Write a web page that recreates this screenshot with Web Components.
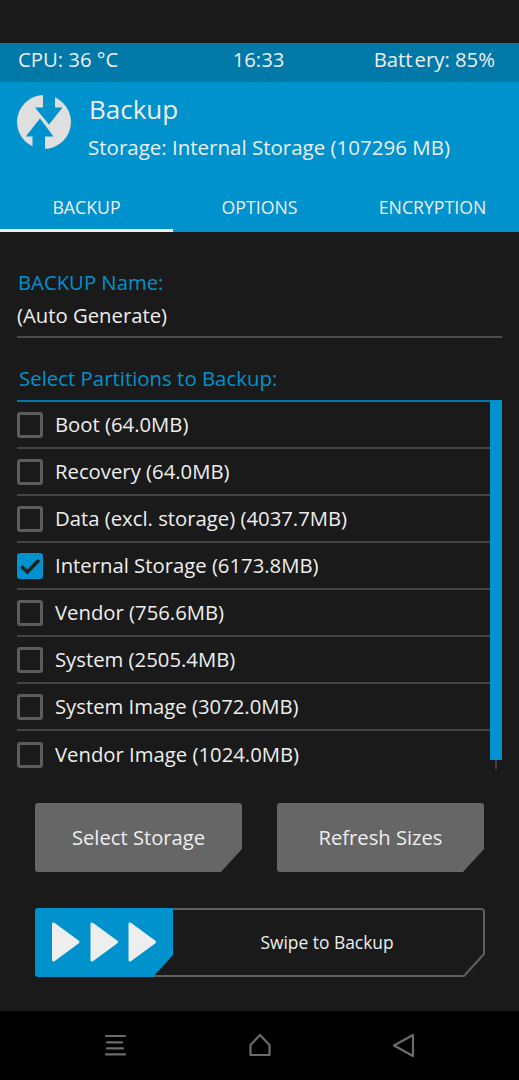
<!DOCTYPE html>
<html>
<head>
<meta charset="utf-8">
<title>Backup</title>
<style>
  html, body { margin: 0; padding: 0; background: #1a1a1a; }
  body { font-family: "Open Sans", "Noto Sans", sans-serif; color: #eee; width: 519px; height: 1080px; overflow: hidden; }
</style>
</head>
<body>
<tw-status cpu="CPU: 36 °C" time="16:33"><span>Bat<span style="letter-spacing:2px">t</span>ery: 85%</span></tw-status>
<tw-header title="Backup" sub="Storage: Internal Storage (107296 MB)"></tw-header>
<tw-tabs>
  <tw-tab active>BACKUP</tw-tab>
  <tw-tab>OPTIONS</tw-tab>
  <tw-tab>ENCRYPTION</tw-tab>
</tw-tabs>
<tw-field label="BACKUP Name:" value="(Auto Generate)"></tw-field>
<tw-partitions heading="Select Partitions to Backup:">
  <tw-check>Boot (64.0MB)</tw-check>
  <tw-check>Recovery (64.0MB)</tw-check>
  <tw-check>Data (excl. storage) (4037.7MB)</tw-check>
  <tw-check checked>Internal Storage (6173.8MB)</tw-check>
  <tw-check>Vendor (756.6MB)</tw-check>
  <tw-check>System (2505.4MB)</tw-check>
  <tw-check>System Image (3072.0MB)</tw-check>
  <tw-check last>Vendor Image (1024.0MB)</tw-check>
</tw-partitions>
<tw-actions>
  <tw-button>Select Storage</tw-button>
  <tw-button>Refresh Sizes</tw-button>
</tw-actions>
<tw-swipe>Swipe to Backup</tw-swipe>
<tw-nav></tw-nav>

<script>
class TwStatus extends HTMLElement {
  constructor() {
    super();
    this.attachShadow({ mode: 'open' });
    this.shadowRoot.innerHTML = `
      <style>
        :host { display: grid; grid-template-columns: 1fr auto 1fr; align-items: center; box-sizing: border-box;
          margin-top: 43px; height: 39px; padding: 0 24px 9px 18px; background: #0079a9; color: #eee;
          border-top: 1px solid #0085b8; font-size: 20.3px; line-height: 30px; }
        .time { margin-left: 4px; }
        ::slotted(span) { justify-self: end; }
      </style>
      <span>${this.getAttribute('cpu')}</span>
      <span class="time">${this.getAttribute('time')}</span>
      <slot></slot>`;
  }
}

class TwHeader extends HTMLElement {
  constructor() {
    super();
    this.attachShadow({ mode: 'open' });
    this.shadowRoot.innerHTML = `
      <style>
        :host { display: flex; box-sizing: border-box; height: 100px; padding: 13px 0 0 17px; background: #0092cc; color: #eee; }
        svg { width: 54px; height: 54px; flex: none; }
        .text { margin-left: 18px; }
        .title { font-size: 26px; line-height: 30px; margin-top: -1px; }
        .sub { font-size: 20.5px; line-height: 28px; margin-top: 9px; margin-left: -1px; white-space: nowrap; }
      </style>
      <svg viewBox="17 95 54 54">
        <circle cx="44" cy="122" r="27" fill="#dfdfdf"/>
        <polygon fill="#0092cc" points="43,90 55,90 55,107.5 62.5,107.5 49,124.5 35,107.5 43,107.5"/>
        <polygon fill="#0092cc" points="40,118.5 53.5,136.5 45,136.5 45,152 32.5,152 32.5,136.5 25.7,136.5"/>
      </svg>
      <div class="text">
        <div class="title">${this.getAttribute('title')}</div>
        <div class="sub">${this.getAttribute('sub')}</div>
      </div>`;
  }
}

class TwTabs extends HTMLElement {
  constructor() {
    super();
    this.attachShadow({ mode: 'open' });
    this.shadowRoot.innerHTML = `
      <style>
        :host { display: grid; grid-template-columns: 173px 173px 173px; height: 50px; background: #0092cc; }
      </style>
      <slot></slot>`;
  }
}

class TwTab extends HTMLElement {
  constructor() {
    super();
    this.attachShadow({ mode: 'open' });
    this.shadowRoot.innerHTML = `
      <style>
        :host { display: block; box-sizing: border-box; height: 50px; padding-top: 12px; text-align: center;
          font-size: 17.7px; line-height: 26px; color: #eee; }
        :host([active]) { border-bottom: 3px solid #eee; }
      </style>
      <slot></slot>`;
  }
}

class TwField extends HTMLElement {
  constructor() {
    super();
    this.attachShadow({ mode: 'open' });
    this.shadowRoot.innerHTML = `
      <style>
        :host { display: block; box-sizing: border-box; margin: 36px 17px 0 17px; height: 70px; border-bottom: 2px solid #4c4c4c; }
        .label { color: #0092cc; font-size: 20.3px; line-height: 28px; margin-left: 1px; }
        .value { color: #eee; font-size: 20.3px; line-height: 28px; margin-top: 5px; }
      </style>
      <div class="label">${this.getAttribute('label')}</div>
      <div class="value">${this.getAttribute('value')}</div>`;
  }
}

class TwPartitions extends HTMLElement {
  constructor() {
    super();
    this.attachShadow({ mode: 'open' });
    this.shadowRoot.innerHTML = `
      <style>
        :host { display: block; margin: 26px 17px 0 17px; height: 433px; }
        .heading { color: #0092cc; font-size: 20.4px; line-height: 28px; height: 36px; padding-left: 2px; box-sizing: border-box; }
        .box { position: relative; border-top: 2px solid #0079a9; height: 369px; box-sizing: border-box; padding-right: 12px; }
        .track { position: absolute; right: 5px; top: -2px; width: 2px; height: 369px; background: #444; }
        .thumb { position: absolute; right: 0; top: -2px; width: 12px; height: 360px; background: #0092cc; }
      </style>
      <div class="heading">${this.getAttribute('heading')}</div>
      <div class="box">
        <slot></slot>
        <div class="track"></div>
        <div class="thumb"></div>
      </div>`;
  }
}

class TwCheck extends HTMLElement {
  constructor() {
    super();
    this.attachShadow({ mode: 'open' });
    const checked = this.hasAttribute('checked');
    const mark = checked ? '<svg viewBox="0 0 26 26"><path d="M4.5 13.5 L10.5 19 L22 7" fill="none" stroke="#1f1f1f" stroke-width="3.4"/></svg>' : '';
    this.shadowRoot.innerHTML = `
      <style>
        :host { display: flex; align-items: center; box-sizing: border-box; height: 47px; padding-bottom: 2px; color: #eee;
          border-bottom: 2px solid #444; font-size: 20.3px; }
        :host([last]) { border-bottom: 0; }
        .cb { width: 26px; height: 26px; box-sizing: border-box; border: 3px solid #5c5c5c; border-radius: 3px; flex: none; margin-right: 12px; position: relative; top: 1px; }
        .cb.on { background: #0092cc; border: 0; }
        svg { display: block; width: 26px; height: 26px; }
      </style>
      <div class="cb${checked ? ' on' : ''}">${mark}</div>
      <slot></slot>`;
  }
}

class TwActions extends HTMLElement {
  constructor() {
    super();
    this.attachShadow({ mode: 'open' });
    this.shadowRoot.innerHTML = `
      <style>
        :host { display: flex; justify-content: space-between; margin: 6px 35px 0 35px; height: 69px; }
      </style>
      <slot></slot>`;
  }
}

class TwButton extends HTMLElement {
  constructor() {
    super();
    this.attachShadow({ mode: 'open' });
    this.shadowRoot.innerHTML = `
      <style>
        :host { display: flex; align-items: center; justify-content: center; box-sizing: border-box; width: 207px; height: 69px; padding-bottom: 2px;
          background: #666; color: #eee; font-size: 20.2px;
          clip-path: path('M3 0H204Q207 0 207 3V46L186 69H3Q0 69 0 66V3Q0 0 3 0Z'); }
      </style>
      <slot></slot>`;
  }
}

class TwSwipe extends HTMLElement {
  constructor() {
    super();
    this.attachShadow({ mode: 'open' });
    this.shadowRoot.innerHTML = `
      <style>
        :host { display: block; position: relative; margin: 36px 35px 0 35px; width: 450px; height: 69px; color: #eee; font-size: 17.4px; }
        svg { position: absolute; left: 0; top: 0; }
        .label { position: absolute; left: 138px; right: 4px; top: 0; bottom: 2px; display: flex; align-items: center; justify-content: center; }
      </style>
      <svg width="450" height="69" viewBox="0 0 450 69">
        <path d="M3 1H446Q449 1 449 4V46L429 68H3" fill="none" stroke="#5f5f5f" stroke-width="2"/>
        <path d="M3 0H138V47L118 69H3Q0 69 0 66V3Q0 0 3 0Z" fill="#0092cc"/>
        <g fill="#eee" stroke="#eee" stroke-width="3" stroke-linejoin="round">
          <polygon points="18.5,16 18.5,52 43,34"/>
          <polygon points="57,16 57,52 81.5,34"/>
          <polygon points="95,16 95,52 119.5,34"/>
        </g>
      </svg>
      <div class="label"><slot></slot></div>`;
  }
}

class TwNav extends HTMLElement {
  constructor() {
    super();
    this.attachShadow({ mode: 'open' });
    this.shadowRoot.innerHTML = `
      <style>
        :host { display: block; position: fixed; left: 0; right: 0; bottom: 0; height: 69px; background: #000; }
        svg { display: block; width: 519px; height: 69px; }
      </style>
      <svg viewBox="0 1011 519 69" fill="none" stroke="#6b6b6b" stroke-width="2.2" stroke-linejoin="round" stroke-linecap="round">
        <path d="M106 1036H125M107 1042.3H122M107 1048.3H123M106 1054.4H125"/>
        <path d="M260 1035L250.5 1045V1055H269.5V1045Z"/>
        <path d="M413 1035L394 1045.5L413 1056Z"/>
      </svg>`;
  }
}

customElements.define('tw-status', TwStatus);
customElements.define('tw-header', TwHeader);
customElements.define('tw-tabs', TwTabs);
customElements.define('tw-tab', TwTab);
customElements.define('tw-field', TwField);
customElements.define('tw-partitions', TwPartitions);
customElements.define('tw-check', TwCheck);
customElements.define('tw-actions', TwActions);
customElements.define('tw-button', TwButton);
customElements.define('tw-swipe', TwSwipe);
customElements.define('tw-nav', TwNav);
</script>
</body>
</html>
